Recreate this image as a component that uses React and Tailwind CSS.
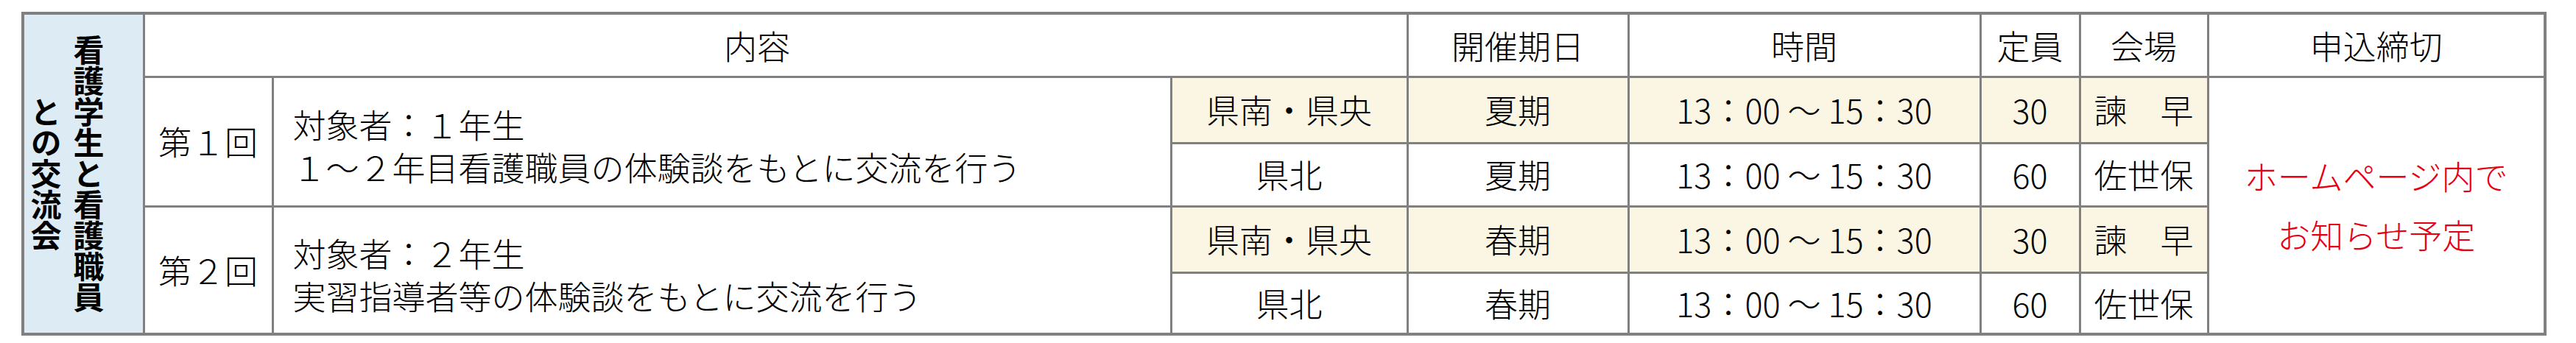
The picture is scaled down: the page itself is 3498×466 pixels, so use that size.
import React from "react";

const rows = [
  {
    no: "第１回",
    target: "対象者：１年生",
    text: "１～２年目看護職員の体験談をもとに交流を行う",
    term: "夏期",
  },
  {
    no: "第２回",
    target: "対象者：２年生",
    text: "実習指導者等の体験談をもとに交流を行う",
    term: "春期",
  },
];

const cell = "border-[3px] border-[#808080] p-0 text-center align-middle";
const yellow = "bg-[#fbf5e4]";

function App() {
  return (
    <div className="w-[3498px] h-[466px] bg-white pl-[29px] pt-[16px] font-['Noto_Sans_CJK_JP',sans-serif] text-[45px] font-light text-black">
      <table className="table-fixed w-[3425px] border-collapse border-[4px] border-[#808080]">
        <colgroup>
          <col className="w-[164px]" />
          <col className="w-[175px]" />
          <col className="w-[1220px]" />
          <col className="w-[321px]" />
          <col className="w-[300px]" />
          <col className="w-[478px]" />
          <col className="w-[135px]" />
          <col className="w-[174px]" />
          <col className="w-[458px]" />
        </colgroup>
        <tbody>
          {/* header row */}
          <tr className="h-[86px]">
            <td rowSpan={5} className={`${cell} bg-[#ddebf5]`}>
              <div className="mx-auto h-[430px] [writing-mode:vertical-rl] text-center font-bold text-[42px] leading-[58px]">
                看護学生と看護職員
                <br />
                との交流会
              </div>
            </td>
            <th colSpan={3} className={`${cell} font-light pr-[50px]`}>内容</th>
            <th className={`${cell} font-light`}>開催期日</th>
            <th className={`${cell} font-light`}>時間</th>
            <th className={`${cell} font-light`}>定員</th>
            <th className={`${cell} font-light`}>会場</th>
            <th className={`${cell} font-light`}>申込締切</th>
          </tr>

          {rows.map((r, i) => (
            <React.Fragment key={r.no}>
              <tr className="h-[90px]">
                <td rowSpan={2} className={cell}>{r.no}</td>
                <td rowSpan={2} className={`${cell} text-left pl-[26px] pt-3 leading-[58px]`}>
                  {r.target}
                  <br />
                  {r.text}
                </td>
                <td className={`${cell} ${yellow}`}>県南・県央</td>
                <td className={`${cell} ${yellow}`}>{r.term}</td>
                <td className={`${cell} ${yellow}`}>13：00 ～ 15：30</td>
                <td className={`${cell} ${yellow}`}>30</td>
                <td className={`${cell} ${yellow}`}>諫　早</td>
                {i === 0 && (
                  <td rowSpan={4} className={`${cell} text-[#e60012] leading-[80px]`}>
                    ホームページ内で
                    <br />
                    お知らせ予定
                  </td>
                )}
              </tr>
              <tr className={i === 0 ? "h-[86px]" : "h-[84px]"}>
                <td className={cell}>県北</td>
                <td className={cell}>{r.term}</td>
                <td className={cell}>13：00 ～ 15：30</td>
                <td className={cell}>60</td>
                <td className={cell}>佐世保</td>
              </tr>
            </React.Fragment>
          ))}
        </tbody>
      </table>
    </div>
  );
}

export default App;
